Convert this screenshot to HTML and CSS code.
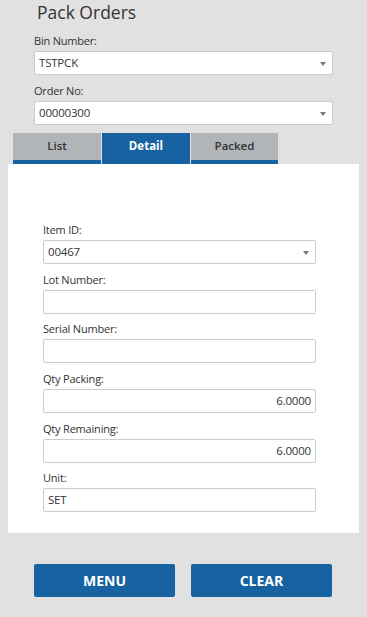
FILE: index.html
```html
<!DOCTYPE html>
<html lang="en">
<head>
    <meta charset="UTF-8">
    <title>Pack Orders</title>
    <link rel="stylesheet" href="styles.css">
</head>
<body>
    <h1 class="title">Pack Orders</h1>
    <div class="top-fields">
        <div class="field">
            <label>Bin Number:</label>
            <div class="box select">TSTPCK<span class="caret"></span></div>
        </div>
        <div class="field">
            <label>Order No:</label>
            <div class="box select">00000300<span class="caret"></span></div>
        </div>
    </div>

    <div class="tabs">
        <div class="tab">List</div>
        <div class="tab active">Detail</div>
        <div class="tab">Packed</div>
    </div>

    <div class="panel">
        <div class="field">
            <label>Item ID:</label>
            <div class="box select">00467<span class="caret"></span></div>
        </div>
        <div class="field">
            <label>Lot Number:</label>
            <div class="box"></div>
        </div>
        <div class="field">
            <label>Serial Number:</label>
            <div class="box"></div>
        </div>
        <div class="field">
            <label>Qty Packing:</label>
            <div class="box num">6.0000</div>
        </div>
        <div class="field">
            <label>Qty Remaining:</label>
            <div class="box num">6.0000</div>
        </div>
        <div class="field">
            <label>Unit:</label>
            <div class="box">SET</div>
        </div>
    </div>

    <div class="buttons">
        <button class="btn">MENU</button>
        <button class="btn">CLEAR</button>
    </div>
</body>
</html>
```
FILE: styles.css
```css
body {
    margin: 0;
    background-color: #e1e1e1;
    color: #333;
    font-family: "Open Sans", "Noto Sans", sans-serif;
    font-size: 11px;
}
.title {
    margin: 0;
    padding-left: 37px;
    font-size: 17.5px;
    line-height: 24px;
    font-weight: normal;
}
.top-fields {
    margin-top: 10px;
    padding: 0 34px;
}
.field {
    margin-bottom: 8.6px;
}
.field label {
    display: block;
    line-height: 14px;
    margin-bottom: 3px;
    letter-spacing: -0.2px;
}
.box {
    position: relative;
    box-sizing: border-box;
    height: 24px;
    line-height: 22px;
    padding: 0 4px;
    background: #fff;
    border: 1px solid #ccc;
    border-radius: 2px;
    font-size: 11.5px;
    letter-spacing: -0.2px;
}
.num {
    text-align: right;
}
.caret {
    position: absolute;
    right: 6px;
    top: 10px;
    border-left: 3.5px solid transparent;
    border-right: 3.5px solid transparent;
    border-top: 4px solid #777;
}
.tabs {
    display: flex;
    gap: 1px;
    margin: 1px 0 0 13px;
}
.tab {
    box-sizing: border-box;
    width: 88px;
    height: 31px;
    padding-top: 5px;
    background: #b1b5b8;
    border-bottom: 4px solid #1762a0;
    text-align: center;
    font-size: 11.5px;
    font-weight: 600;
    color: #333;
}
.tab:last-child {
    width: 87px;
}
.tab.active {
    background: #1762a0;
    color: #fff;
    font-weight: 700;
}
.panel {
    margin: 0 8px;
    padding: 59px 43px 12px 35px;
    background: #fff;
}
.buttons {
    display: flex;
    gap: 16px;
    margin: 31px 0 0 34px;
}
.btn {
    width: 141px;
    height: 33px;
    border: none;
    border-radius: 2px;
    background: #1762a0;
    color: #fff;
    font-family: "Open Sans", "Noto Sans", sans-serif;
    font-size: 14px;
    font-weight: 700;
}
```
